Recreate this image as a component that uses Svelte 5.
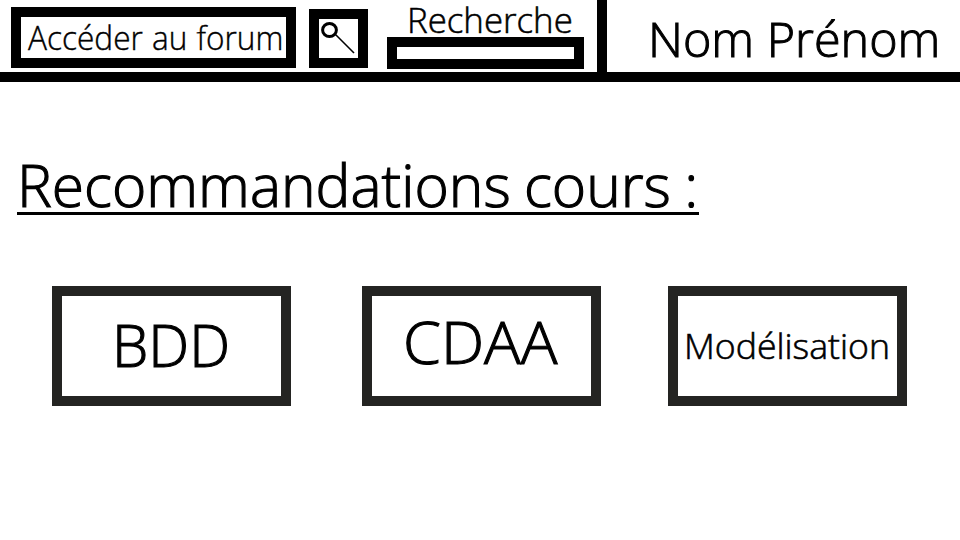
<script>
  const courses = [
    { name: 'BDD', kind: 'bdd' },
    { name: 'CDAA', kind: 'cdaa' },
    { name: 'Modélisation', kind: 'model' }
  ];
</script>

<div class="page">
  <header>
    <button class="forum"><span>Accéder au forum</span></button>
    <button class="loupe" aria-label="Rechercher">
      <svg width="39" height="39" viewBox="0 0 39 39">
        <ellipse cx="10.5" cy="11" rx="6.9" ry="6.6" fill="none" stroke="#000" stroke-width="3" />
        <path d="M16.5 15.5 L35 34" stroke="#000" stroke-width="1.6" fill="none" />
      </svg>
    </button>
    <label class="search">
      <span>Recherche</span>
      <input type="text" />
    </label>
    <div class="user"><span>Nom Prénom</span></div>
  </header>
  <main>
    <h1><span>Recommandations cours :</span></h1>
    <div class="cards">
      {#each courses as c}
        <article class={c.kind}><span>{c.name}</span></article>
      {/each}
    </div>
  </main>
</div>

<style>
  :global(body) { background: #fff; overflow: hidden; }
  .page {
    width: 960px;
    height: 540px;
    background: #fff;
    color: #000;
    font-family: "Open Sans", "Noto Sans", sans-serif;
    font-weight: 300;
  }
  .page * { box-sizing: border-box; }
  span {
    display: block;
    width: max-content;
    white-space: nowrap;
    transform-origin: 0 0;
    -webkit-text-stroke: 1.1px #000;
  }
  button {
    background: #fff;
    color: #000;
    border: 10px solid #000;
    padding: 0;
    font: inherit;
    flex: none;
  }
  header {
    display: flex;
    align-items: flex-start;
    height: 82px;
    border-bottom: 10px solid #000;
  }
  .forum { width: 285px; height: 61px; margin: 7px 0 0 11px; padding-left: 7px; text-align: left; }
  .forum span { font-size: 32.5px; line-height: 37px; transform: scaleX(0.972); word-spacing: 1px; -webkit-text-stroke-width: 0.4px; }
  .loupe { width: 59px; height: 59px; margin: 9px 0 0 13px; }
  .loupe svg { display: block; }
  .search { display: block; flex: none; width: 197px; margin-left: 19px; }
  .search span { height: 37px; margin-left: 20px; padding-top: 3px; font-size: 34px; line-height: 34px; transform: scaleX(1.024); -webkit-text-stroke-width: 0.5px; }
  input {
    display: block;
    width: 197px;
    height: 32px;
    border: 10px solid #000;
    border-radius: 0;
    padding: 0;
    background: #fff;
  }
  .user {
    flex: none;
    width: 363px;
    height: 82px;
    margin-left: 13px;
    border-left: 10px solid #000;
    padding-left: 41px;
  }
  .user span { font-size: 48.5px; line-height: 76px; transform: scaleX(0.999); -webkit-text-stroke-width: 1px; }
  h1 { margin: 68px 0 0 17px; width: 682px; font-size: 58px; font-weight: inherit; height: 65px; border-bottom: 3px solid #000; }
  h1 span { line-height: 70px; height: 62px; transform: scaleX(1.011); word-spacing: -2px; }
  .cards { display: flex; padding: 71px 0 0 52px; }
  article {
    flex: none;
    width: 239px;
    height: 120px;
    border: 10px solid #242422;
  }
  .bdd { padding-left: 50px; }
  .cdaa { margin-left: 71px; padding-left: 31px; }
  .model { margin-left: 67px; padding-left: 6px; }
  .bdd span { font-size: 58px; line-height: 98px; transform: scaleX(0.998); }
  .cdaa span { font-size: 58px; line-height: 92px; transform: scaleX(1.053); }
  .model span { font-size: 35.5px; line-height: 99px; transform: scaleX(1.004); -webkit-text-stroke-width: 0.6px; }
</style>
